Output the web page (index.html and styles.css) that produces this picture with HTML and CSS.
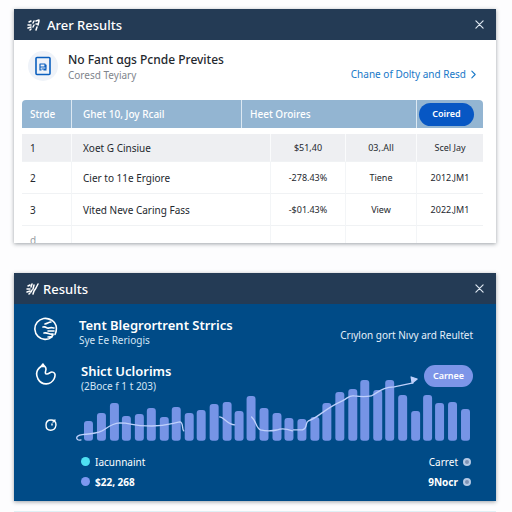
FILE: index.html
```html
<!DOCTYPE html>
<html lang="en">
<head>
<meta charset="utf-8">
<title>Results</title>
<link rel="stylesheet" href="styles.css">
</head>
<body>
<main class="page">
  <section class="card">
    <header class="bar">
      <svg class="mark" viewBox="0 0 14 14" aria-hidden="true"><path d="M3 4l2-1M2 7h3M2 10l3-1M4 12l1-1M8 3L7 5M8 7l-1 2M10 3l3-1M10 6h2M13 3l-1 4M11 9l-1 3"/></svg>
      <h1 class="bar-title">Arer Results</h1>
      <button class="close" aria-label="Close"><svg viewBox="0 0 10 10"><path d="M1 1l8 8M9 1l-8 8"/></svg></button>
    </header>
    <div class="intro">
      <span class="badge"><svg viewBox="0 0 18 20" aria-hidden="true"><rect x="2" y="1.500" width="14" height="17" rx="1"/><path class="thin" d="M6 14V8h5v3H6M8 13h4V9M6 14h1M10 14h2"/></svg></span>
      <div class="intro-text">
        <h2 class="title">No Fant ɑgs Pcnde Prevites</h2>
        <p class="sub">Coresd Teyiary</p>
      </div>
      <a class="more" href="#results">Chane of Dolty and Resd <svg viewBox="0 0 6 10" aria-hidden="true"><path d="M1 1l4 4-4 4"/></svg></a>
    </div>
    <div class="table-wrap">
      <table class="table">
        <colgroup><col class="c-num"><col class="c-name"><col class="c-gap"><col class="c-val"><col class="c-kind"><col class="c-date"></colgroup>
        <thead>
          <tr><th>Strde</th><th class="name">Ghet 10, Joy Rcail</th><th colspan="3">Heet Oroires</th><th class="action"><button class="pill pill-blue">Coired</button></th></tr>
        </thead>
        <tbody>
          <tr class="spacer" aria-hidden="true"><td colspan="6"></td></tr>
          <tr class="active"><td>1</td><td class="name" colspan="2">Xoet G Cinsiue</td><td class="mid">$51,40</td><td class="mid">03,.All</td><td class="mid">Scel Jay</td></tr>
          <tr><td>2</td><td class="name" colspan="2">Cier to 11e Ergiore</td><td class="mid">-278.43%</td><td class="mid">Tiene</td><td class="mid">2012.JM1</td></tr>
          <tr><td>3</td><td class="name" colspan="2">Vited Neve Caring Fass</td><td class="mid">-$01.43%</td><td class="mid">View</td><td class="mid">2022.JM1</td></tr>
          <tr class="cut"><td>d</td><td class="name" colspan="2"></td><td></td><td></td><td></td></tr>
        </tbody>
      </table>
    </div>
  </section>

  <section class="card card-blue" id="results">
    <header class="bar">
      <svg class="mark" viewBox="0 0 14 14" aria-hidden="true"><path d="M3 4l2-1M2 7h3M2 10l3-1M4 12l1-1M7 2L6 5M7 8l-1 2M9 3L8 7M13 2l-2 4-2 3-1 3"/></svg>
      <h1 class="bar-title">Results</h1>
      <button class="close" aria-label="Close"><svg viewBox="0 0 10 10"><path d="M1 1l8 8M9 1l-8 8"/></svg></button>
    </header>
    <div class="panel">
      <div class="row">
        <svg class="glyph" viewBox="0 0 24 24" aria-hidden="true"><path d="M17 3A10.500 10.500 0 1 0 18 20M12 1.500c4 0 8 2 10 7 1 4 0 7-1 9M11 7c3-1 4-2 6-2M9 10c4-1 3 2 6 1s3 0 5 0M14 14h6M10 16c4-1 5 2 9 1M14 20c3 0 4 0 5-2"/></svg>
        <div class="row-text">
          <h2 class="title">Tent Blegrortrent Strrics</h2>
          <p class="sub">Sye Ee Reriogis</p>
        </div>
        <p class="note">Crıylon gort Nıvy ard Reulťet</p>
      </div>
      <div class="row row-chart">
        <svg class="glyph" viewBox="0 0 24 24" aria-hidden="true"><path d="M7 3.500C2 7 2 12 4 16c4 7 13 6 16 0 2-4 1-7-2-7-2 0-3 2-5 2-3 0-1-3-1-5 0-3-2-2-3-5L7 3.500l4 0"/></svg>
        <div class="row-text inset">
          <h2 class="title">Shict Uclorims</h2>
          <p class="sub">(2Boce f 1 t 203)</p>
        </div>
        <button class="pill pill-violet">Carnee</button>
      </div>
      <div class="chart-row">
        <svg class="dial" viewBox="0 0 12 14" aria-hidden="true"><path d="M6 2C2 2 1 5 1 7c0 7 9 7 10 0 0-3-2-5-5-5M10 2L8 4M7 6v1"/></svg>
        <svg class="chart" viewBox="0 0 400 66" role="img" aria-label="Bar chart with a trend line">
          <g class="bars">
            <rect x="9" y="45" width="9" height="20" rx="3"/><rect x="22" y="37" width="9" height="28" rx="3"/><rect x="35" y="27" width="9" height="38" rx="3"/><rect x="47" y="40" width="9" height="25" rx="3"/><rect x="60" y="38" width="9" height="27" rx="3"/><rect x="72" y="32" width="9" height="33" rx="3"/><rect x="85" y="41" width="9" height="24" rx="3"/><rect x="97" y="31" width="9" height="34" rx="3"/><rect x="110" y="37" width="9" height="28" rx="3"/><rect x="122" y="34" width="9" height="31" rx="3"/><rect x="135" y="28" width="9" height="37" rx="3"/><rect x="148" y="26" width="9" height="39" rx="3"/><rect x="160" y="35" width="9" height="30" rx="3"/><rect x="172" y="20" width="9" height="45" rx="3"/><rect x="185" y="32" width="9" height="33" rx="3"/><rect x="198" y="37" width="9" height="28" rx="3"/><rect x="210" y="42" width="9" height="23" rx="3"/><rect x="223" y="43" width="9" height="22" rx="3"/><rect x="236" y="41" width="9" height="24" rx="3"/><rect x="248" y="27" width="9" height="38" rx="3"/><rect x="261" y="16" width="9" height="49" rx="3"/><rect x="274" y="13" width="9" height="52" rx="3"/><rect x="286" y="4" width="9" height="61" rx="3"/><rect x="299" y="14" width="9" height="51" rx="3"/><rect x="311" y="4" width="9" height="61" rx="3"/><rect x="324" y="19" width="9" height="46" rx="3"/><rect x="337" y="35" width="9" height="30" rx="3"/><rect x="349" y="19" width="9" height="46" rx="3"/><rect x="361" y="27" width="9" height="38" rx="3"/><rect x="374" y="26" width="9" height="39" rx="3"/><rect x="387" y="33" width="9" height="32" rx="3"/>
          </g>
          <path class="trend" d="M6 64c-3 1-5-1-4-3 2-4 14-1 25-6 6-3 8-7 18-8 10 0 15 3 27 3 18 1 22-2 33-4 4 0 2 8 4 9M145 41c4 0 8 8 15 8M177 41c5 4 4 11 9 13 8 2 12 1 17 0 5-2 9-1 15 1M219 54h9c6-2 2-7 6-9 8-2 16-12 34-20 7-4 7-6 12-5 7 1 12 1 17 0 9-5 12-9 23-9l19-4"/>
          <path class="head" d="M337 1l6 2-5 4z"/>
        </svg>
      </div>
      <div class="legend">
        <ul class="keys"><li><i class="dot cyan"></i>Iacunnaint</li><li class="strong"><i class="dot violet"></i>$22, 268</li></ul>
        <ul class="keys keys-end"><li>Carret<i class="dot ring"></i></li><li class="strong">9Nocr<i class="dot ring"></i></li></ul>
      </div>
    </div>
  </section>
  <div class="next"></div>
</main>
</body>
</html>
```
FILE: styles.css
```css
* { box-sizing: border-box; }
body {
  margin: 0;
  background: #fdfdfe;
  color: #24282e;
  font-family: "Noto Sans", "Open Sans", sans-serif;
  font-size: 10px;
  line-height: 14px;
}
h1, h2, p, ul { margin: 0; padding: 0; }
ul { list-style: none; }
button { border: 0; padding: 0; font: inherit; color: inherit; cursor: pointer; }
svg { fill: none; stroke: currentColor; stroke-linecap: round; stroke-linejoin: round; flex: none; }

.page { padding: 9px 16px 0 14px; height: 100vh; overflow: hidden; }
.card {
  background: #fff;
  box-shadow: 0 1px 4px rgba(40, 50, 60, .45);
  margin-bottom: 30px;
  overflow: hidden;
}
.bar {
  display: flex;
  align-items: center;
  gap: 7px;
  height: 31px;
  padding: 0 12px;
  background: #243b55;
  color: #fff;
}
.mark { width: 14px; height: 14px; stroke-width: 1.5; }
.bar-title { flex: 1; font-size: 13px; font-weight: 500; line-height: 18px; }
.close { display: flex; background: none; color: #dfe8f2; }
.close svg { width: 9px; height: 9px; stroke-width: 1.3; }

.intro { display: flex; align-items: center; height: 60px; padding: 0 20px 8px 14px; }
.badge {
  display: flex;
  align-items: center;
  justify-content: center;
  width: 30px;
  height: 30px;
  margin-right: 10px;
  border-radius: 50%;
  background: #eff3f9;
  color: #0b5fbf;
}
.badge svg { width: 18px; height: 20px; stroke-width: 1.6; }
.badge .thin { stroke-width: 1.2; }
.intro-text, .row-text { flex: 1; }
.intro-text { padding-top: 2px; }
.title { font-size: 12px; font-weight: 500; line-height: 16px; }
.sub { font-size: 10px; line-height: 14px; color: #7f858d; }
.more {
  display: flex;
  align-items: center;
  gap: 5px;
  margin-top: 16px;
  color: #1778c8;
  text-decoration: none;
}
.more svg { width: 5px; height: 9px; stroke-width: 1.3; }

.table-wrap { height: 143px; padding: 0 13px 0 8px; overflow: hidden; }
.table { width: 100%; border-collapse: separate; border-spacing: 0; table-layout: fixed; }
.c-num { width: 50px; }
.c-gap { width: 29px; }
.c-val { width: 75px; }
.c-kind { width: 71px; }
.c-date { width: 66px; }
.table th, .table td { padding: 0 8px; text-align: left; font-weight: 400; }
.table th { height: 28px; background: #93b5d2; color: #fff; border-right: 1px solid #dce8f2; font-weight: 500; }
.table th:first-child { border-top-left-radius: 4px; }
.table th:last-child { border-top-right-radius: 4px; border-right: 0; }
.table .name { padding-left: 11px; }
.table th.action { padding: 0 2px; }
.table td { height: 32px; border-right: 1px solid #f3f5f7; border-bottom: 1px solid #f0f2f4; }
.table td:last-child { border-right: 0; }
.table td.mid { padding: 0; font-size: 9px; text-align: center; }
.table .spacer td { height: 6px; padding: 0; border: 0; }
.table .active td { height: 28px; background: #eeeff2; border-right-color: #fafbfc; }
.table .cut td { height: 28px; border-bottom: 0; color: #9a9fa5; }

.pill { display: block; border-radius: 12px; color: #fff; font-size: 9px; font-weight: 600; text-align: center; }
.pill-blue { width: 55px; height: 23px; background: #0757c4; }
.pill-violet { width: 49px; height: 22px; background: #7c95e8; }

.card-blue { margin-bottom: 10px; background: #004b87; color: #fff; }
.card-blue .bar { padding-left: 11px; gap: 4px; }
.panel { padding: 13px 23px 9px 20px; }
.row { display: flex; align-items: flex-start; gap: 21px; height: 46px; }
.glyph { width: 24px; height: 24px; stroke-width: 1.6; }
.card-blue .title { font-size: 13px; font-weight: 600; }
.card-blue .sub { color: #d4e5f5; }
.inset { padding-left: 2px; }
.note { margin-top: 11px; color: #e6f0fa; }
.row-chart .pill { margin-top: 2px; }
.row-chart { position: relative; z-index: 1; }
.chart-row { display: flex; align-items: flex-end; gap: 18px; margin: -33px -1px 0 11px; }
.dial { width: 12px; height: 14px; margin-bottom: 10px; stroke-width: 1.4; }
.chart { flex: 1; min-width: 0; }
.bars { fill: #7694e6; stroke: none; }
.trend, .head { stroke: #bfd0fb; stroke-width: 1.3; }
.head { fill: #bfd0fb; }
.legend { display: flex; justify-content: space-between; margin-top: 10px; padding: 0 2px 0 47px; }
.keys li { display: flex; align-items: center; gap: 5px; height: 20px; }
.keys-end li { justify-content: flex-end; }
.strong { font-weight: 700; }
.dot { width: 9px; height: 9px; border-radius: 50%; }
.cyan { background: #4fe0f2; }
.violet { background: #7d98f0; }
.ring { width: 8px; height: 8px; border: 2px solid #b4c8e4; background: #7f93b4; }
.next { height: 10px; background: #dff1f6; }
```
